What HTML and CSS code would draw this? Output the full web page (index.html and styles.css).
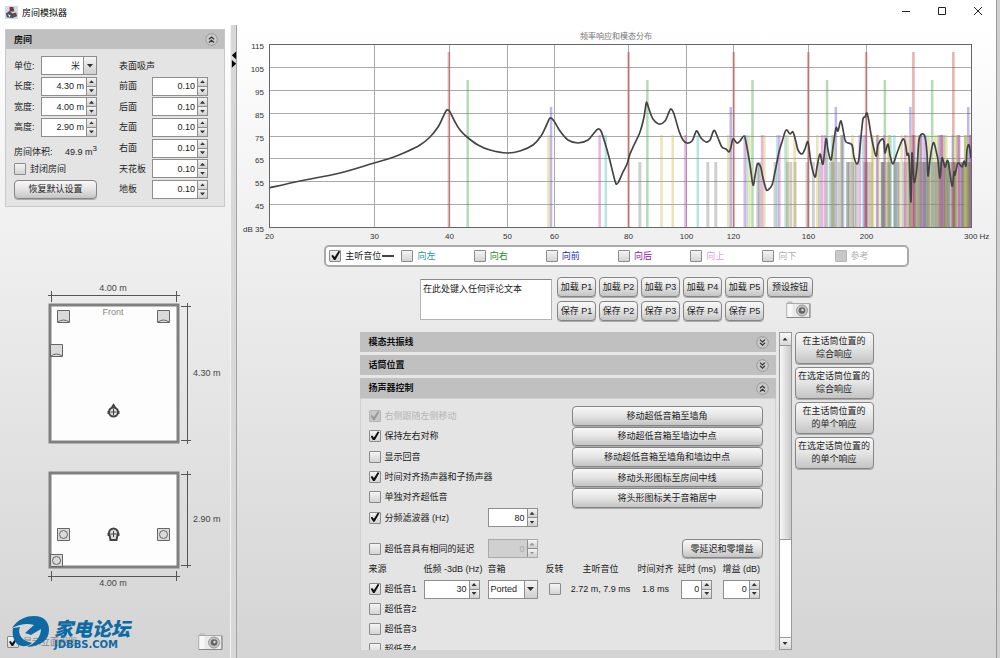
FILE: index.html
```html
<!DOCTYPE html>
<html lang="zh-cn">

<head>
  <meta charset="UTF-8">
  <meta name="viewport" content="width=device-width, initial-scale=1.0">
  <title>房间模拟器</title>
  <link rel="stylesheet" href="styles.css">
</head>

<body>
  <!-- 公用图标 -->
  <svg class="defs" width="0" height="0">
    <symbol id="up2" viewBox="0 0 13 13">
      <circle cx="6.5" cy="6.5" r="5.8" fill="#c9c9c9" stroke="#999" />
      <path d="M4 6.3 6.5 4 9 6.3M4 9.5 6.5 7.2 9 9.5" fill="none" stroke="#333" stroke-width="1.2" />
    </symbol>
    <symbol id="down2" viewBox="0 0 13 13">
      <circle cx="6.5" cy="6.5" r="5.8" fill="#c9c9c9" stroke="#999" />
      <path d="M4 3.6 6.5 5.9 9 3.6M4 6.8 6.5 9.1 9 6.8" fill="none" stroke="#333" stroke-width="1.2" />
    </symbol>
    <symbol id="camera" viewBox="0 0 25 18">
      <path d="M2 2.5V1h4v1.5" fill="#ddd" stroke="#aaa" stroke-width=".8" />
      <rect x=".8" y="2.5" width="23" height="14" fill="#e9e9e9" stroke="#aaa" />
      <rect x="1.5" y="3" width="5" height="13" fill="#f8f8f8" />
      <path d="M1 16.5h23V3" fill="none" stroke="#888" />
      <circle cx="16" cy="9.5" r="5.5" fill="#c4c4c4" stroke="#999" />
      <circle cx="16" cy="9.5" r="3.3" fill="#666" />
      <circle cx="16.5" cy="9" r="1.2" fill="#ddd" />
    </symbol>
  </svg>

  <div class="window">
    <header class="titlebar">
      <svg class="app-icon" viewBox="0 0 14 14">
        <rect width="14" height="14" fill="#d6dade" />
        <path d="M5 1h4l1 5H5z" fill="#7a3140" />
        <path d="M1 8l4-3 3 3 4-1 1 4-5 2-6-1z" fill="#46505e" />
        <path d="M3 9l3 1-1 2z" fill="#fff" />
        <path d="M9 8l3 2-3 1z" fill="#a33" />
      </svg>
      <h1>房间模拟器</h1>
      <div class="win-btns">
        <button aria-label="最小化"><svg viewBox="0 0 10 10"><path d="M1 5.5h8" /></svg></button>
        <button aria-label="最大化"><svg viewBox="0 0 10 10"><path d="M1.5 1.5h7v7h-7z" /></svg></button>
        <button aria-label="关闭"><svg viewBox="0 0 10 10"><path d="M1 1l8 8M9 1l-8 8" /></svg></button>
      </div>
    </header>

    <div class="content">
      <aside class="sidebar">
        <section class="room">
          <div class="bar">
            <h2>房间</h2>
            <button class="fold" aria-label="折叠"><svg><use href="#up2" /></svg></button>
          </div>
          <div class="room-form">
            <div class="col">
              <div class="field"><label for="unit">单位:</label>
                <span class="combo right"><select id="unit"><option>米</option><option>英尺</option></select><i></i></span>
              </div>
              <div class="field"><label for="len">长度:</label>
                <span class="spin"><input id="len" type="text" value="4.30 m"><span><button aria-label="增加"></button><button aria-label="减少"></button></span></span>
              </div>
              <div class="field"><label for="wid">宽度:</label>
                <span class="spin"><input id="wid" type="text" value="4.00 m"><span><button aria-label="增加"></button><button aria-label="减少"></button></span></span>
              </div>
              <div class="field"><label for="hei">高度:</label>
                <span class="spin"><input id="hei" type="text" value="2.90 m"><span><button aria-label="增加"></button><button aria-label="减少"></button></span></span>
              </div>
              <div class="field volume"><span>房间体积:</span><span>49.9 m<sup>3</sup></span></div>
              <label class="check"><input type="checkbox">封闭房间</label>
              <button class="btn">恢复默认设置</button>
            </div>
            <div class="col">
              <div class="field">表面吸声</div>
              <div class="field"><label for="s1">前面</label>
                <span class="spin"><input id="s1" type="text" value="0.10"><span><button aria-label="增加"></button><button aria-label="减少"></button></span></span>
              </div>
              <div class="field"><label for="s2">后面</label>
                <span class="spin"><input id="s2" type="text" value="0.10"><span><button aria-label="增加"></button><button aria-label="减少"></button></span></span>
              </div>
              <div class="field"><label for="s3">左面</label>
                <span class="spin"><input id="s3" type="text" value="0.10"><span><button aria-label="增加"></button><button aria-label="减少"></button></span></span>
              </div>
              <div class="field"><label for="s4">右面</label>
                <span class="spin"><input id="s4" type="text" value="0.10"><span><button aria-label="增加"></button><button aria-label="减少"></button></span></span>
              </div>
              <div class="field"><label for="s5">天花板</label>
                <span class="spin"><input id="s5" type="text" value="0.10"><span><button aria-label="增加"></button><button aria-label="减少"></button></span></span>
              </div>
              <div class="field"><label for="s6">地板</label>
                <span class="spin"><input id="s6" type="text" value="0.10"><span><button aria-label="增加"></button><button aria-label="减少"></button></span></span>
              </div>
            </div>
          </div>
        </section>

        <!-- 俯视图和立面图 -->
        <svg class="plans" viewBox="0 0 230 310">
          <g class="wall">
            <rect x="50" y="26" width="128" height="137" />
            <rect x="50" y="194" width="128" height="94" />
          </g>
          <g class="dim">
            <path d="M48 16.5h132M51.5 12v11M176.5 12v11" />
            <path d="M187.5 24v141M181 27.5h10M181 161.5h10" />
            <path d="M187.5 192v97M181 195.5h10M181 286.5h10" />
            <path d="M48 297.5h132M51.5 292v10M176.5 292v10" />
          </g>
          <g class="speaker">
            <path d="M57.5 31.5h12v12h-12zM58 43q5.5-4 11 0" />
            <path d="M157.5 31.5h12v12h-12zM158 43q5.5-4 11 0" />
            <path d="M50.5 65.5h12v12h-12zM51 77q5.5-4 11 0" />
            <path d="M57.5 249.5h12v12h-12zM157.5 249.5h12v12h-12zM50.5 275.5h12v12h-12z" />
            <circle cx="63.5" cy="255.5" r="4" />
            <circle cx="163.5" cy="255.5" r="4" />
            <circle cx="56.5" cy="281.5" r="4" />
          </g>
          <g class="head">
            <path d="M112 128l1.5-2 1.5 2M108.5 132v3M118.5 132v3" />
            <circle cx="113.5" cy="133" r="4.500" />
            <path d="M110.500 261l-1-5a4.500 4.500 0 1 1 8 0l-1 5zM108.500 254v3M118.500 254v3" />
            <path d="M110.5 133h6M113.5 130v6M110.5 255h6M113.5 252v6" class="cross" />
          </g>
          <text x="113" y="12" text-anchor="middle">4.00 m</text>
          <text x="113" y="36" text-anchor="middle" class="front">Front</text>
          <text x="193" y="97">4.30 m</text>
          <text x="193" y="243">2.90 m</text>
          <text x="113" y="307" text-anchor="middle">4.00 m</text>
        </svg>

        <div class="side-foot">
          <label class="check"><input type="checkbox" checked>显示立面视图</label>
          <button class="cam" aria-label="截图"><svg><use href="#camera" /></svg></button>
          <div class="logo">
            <svg viewBox="0 0 40 34">
              <path d="M0 12C6 3 14 0 22 0 32 0 37 6 37 14 37 24 29 30 15 31 24 27 29 20 29 13L19 19 13 17 22 9C16 7 8 8 0 12z" />
              <path d="M1 12 8 11C5 18 10 25 20 27 15 31 9 31 5 28 1 24 0 17 1 12z" />
            </svg>
            <div>
              <strong>家电论坛</strong>
              <span>JDBBS.COM</span>
            </div>
          </div>
        </div>
      </aside>

      <div class="splitter">
        <svg viewBox="0 0 7 20"><path d="M6 0v9L1 4.5zM1 10v9l5-4.5z" /></svg>
      </div>

      <main class="main">
        <svg class="chart" viewBox="237 25 759 216">
          <text x="616" y="39" text-anchor="middle" class="chart-title">频率响应和模态分布</text>
          <rect x="269" y="45" width="702" height="183" fill="#fff" />
          <g id="grid"></g>
          <g id="modes"></g>
          <path id="curve" />
          <rect x="269.5" y="44.5" width="702" height="183" class="frame" />
          <g id="ticks"></g>
        </svg>

        <div class="legend">
          <label class="check"><input type="checkbox" checked>主听音位<b></b></label>
          <label class="check teal"><input type="checkbox">向左</label>
          <label class="check green"><input type="checkbox">向右</label>
          <label class="check blue"><input type="checkbox">向前</label>
          <label class="check purple"><input type="checkbox">向后</label>
          <label class="check pink"><input type="checkbox">向上</label>
          <label class="check gray"><input type="checkbox">向下</label>
          <label class="check gray"><input type="checkbox" disabled>参考</label>
        </div>

        <div class="presets">
          <textarea aria-label="评论">在此处键入任何评论文本</textarea>
          <div class="preset-btns">
            <button class="btn">加载 P1</button>
            <button class="btn">加载 P2</button>
            <button class="btn">加载 P3</button>
            <button class="btn">加载 P4</button>
            <button class="btn">加载 P5</button>
            <button class="btn">预设按钮</button>
            <button class="btn">保存 P1</button>
            <button class="btn">保存 P2</button>
            <button class="btn">保存 P3</button>
            <button class="btn">保存 P4</button>
            <button class="btn">保存 P5</button>
            <button class="cam" aria-label="截图"><svg><use href="#camera" /></svg></button>
          </div>
        </div>

        <div class="lower">
          <div class="panels">
            <div class="bar">
              <h2>模态共振线</h2>
              <button class="fold" aria-label="展开"><svg><use href="#down2" /></svg></button>
            </div>
            <div class="bar">
              <h2>话筒位置</h2>
              <button class="fold" aria-label="展开"><svg><use href="#down2" /></svg></button>
            </div>
            <section class="speakers">
              <div class="bar">
                <h2>扬声器控制</h2>
                <button class="fold" aria-label="折叠"><svg><use href="#up2" /></svg></button>
              </div>
              <div class="speakers-body">
                <div class="options">
                  <div class="opts">
                    <label class="check off"><input type="checkbox" checked disabled>右侧跟随左侧移动</label>
                    <label class="check"><input type="checkbox" checked>保持左右对称</label>
                    <label class="check"><input type="checkbox">显示回音</label>
                    <label class="check"><input type="checkbox" checked>时间对齐扬声器和子扬声器</label>
                    <label class="check"><input type="checkbox">单独对齐超低音</label>
                    <div class="opt-row">
                      <label class="check"><input type="checkbox" checked>分频滤波器 (Hz)</label>
                      <span class="spin"><input type="text" value="80" aria-label="分频频率"><span><button aria-label="增加"></button><button aria-label="减少"></button></span></span>
                    </div>
                  </div>
                  <div class="moves">
                    <button class="btn">移动超低音箱至墙角</button>
                    <button class="btn">移动超低音箱至墙边中点</button>
                    <button class="btn">移动超低音箱至墙角和墙边中点</button>
                    <button class="btn">移动头形图标至房间中线</button>
                    <button class="btn">将头形图标关于音箱居中</button>
                  </div>
                </div>
                <div class="delay">
                  <div class="opt-row">
                    <label class="check"><input type="checkbox">超低音具有相同的延迟</label>
                    <span class="spin"><input type="text" value="0" disabled aria-label="延迟"><span><button disabled aria-label="增加"></button><button disabled aria-label="减少"></button></span></span>
                  </div>
                  <button class="btn">零延迟和零增益</button>
                </div>
                <table>
                  <thead>
                    <tr>
                      <th>来源</th>
                      <th>低频 -3dB (Hz)</th>
                      <th>音箱</th>
                      <th>反转</th>
                      <th>主听音位</th>
                      <th>时间对齐</th>
                      <th>延时 (ms)</th>
                      <th>增益 (dB)</th>
                    </tr>
                  </thead>
                  <tbody>
                    <tr>
                      <td><label class="check"><input type="checkbox" checked>超低音1</label></td>
                      <td><span class="spin"><input type="text" value="30" aria-label="低频"><span><button aria-label="增加"></button><button aria-label="减少"></button></span></span></td>
                      <td><span class="combo"><select aria-label="音箱"><option>Ported</option><option>Sealed</option></select><i></i></span></td>
                      <td><span class="check"><input type="checkbox" aria-label="反转"></span></td>
                      <td>2.72 m, 7.9 ms</td>
                      <td>1.8 ms</td>
                      <td><span class="spin"><input type="text" value="0" aria-label="延时"><span><button aria-label="增加"></button><button aria-label="减少"></button></span></span></td>
                      <td><span class="spin"><input type="text" value="0" aria-label="增益"><span><button aria-label="增加"></button><button aria-label="减少"></button></span></span></td>
                    </tr>
                    <tr><td colspan="8"><label class="check"><input type="checkbox">超低音2</label></td></tr>
                    <tr><td colspan="8"><label class="check"><input type="checkbox">超低音3</label></td></tr>
                    <tr><td colspan="8"><label class="check"><input type="checkbox">超低音4</label></td></tr>
                  </tbody>
                </table>
              </div>
            </section>
          </div>
          <div class="scroll">
            <button aria-label="向上滚动"></button>
            <div class="thumb"></div>
            <div class="track"></div>
            <button class="down" aria-label="向下滚动"></button>
          </div>
          <div class="responses">
            <button class="btn">在主话筒位置的<br>综合响应</button>
            <button class="btn">在选定话筒位置的<br>综合响应</button>
            <button class="btn">在主话筒位置的<br>的单个响应</button>
            <button class="btn">在选定话筒位置的<br>的单个响应</button>
          </div>
        </div>
      </main>
    </div>
  </div>
  <script src="chart.js"></script>
</body>

</html>
```
FILE: styles.css
```css
* {
  box-sizing: border-box;
  margin: 0;
  padding: 0;
}

body,
button,
input,
select,
textarea {
  font-family: "Liberation Sans", "Noto Sans CJK SC", sans-serif;
  font-size: 9px;
  line-height: 12px;
  color: #222;
}

body {
  background-color: #d0d0d0;
}

button {
  border: none;
  background: none;
}

.defs {
  position: absolute;
}

.window {
  display: flex;
  flex-direction: column;
  height: 100vh;
  margin-right: 3px;
  border-right: 1px solid #999;
  overflow: hidden;
  background: linear-gradient(#fff 4%, #f0f0f0 35%, #d4d4d4);
}

/* 标题栏 */
.titlebar {
  display: flex;
  align-items: center;
  flex: none;
  height: 25px;
  padding-left: 5px;
  background-color: #fff;
}

.app-icon {
  width: 13px;
  height: 13px;
  margin-right: 4px;
}

.titlebar h1 {
  font-size: 9px;
  font-weight: normal;
  color: #000;
}

.win-btns {
  display: flex;
  margin-left: auto;
}

.win-btns button {
  width: 36px;
  height: 24px;
}

.win-btns svg {
  width: 10px;
  height: 10px;
  fill: none;
  stroke: #222;
}

.content {
  display: flex;
  flex: 1;
  min-height: 0;
}

/* 公用控件 */
.bar {
  display: flex;
  justify-content: space-between;
  align-items: center;
  flex: none;
  height: 20px;
  padding: 0 7px 0 9px;
  background-color: #c0c0c0;
}

.bar h2 {
  font-size: 9px;
  font-weight: bold;
  color: #111;
}

.fold,
.fold svg {
  display: block;
  width: 13px;
  height: 13px;
}

.btn {
  border: 1px solid #858585;
  border-radius: 4px;
  background: linear-gradient(#f8f8f8, #e4e4e4 50%, #c4c4c4);
  box-shadow: 0 1px 0 #aaa;
  white-space: nowrap;
}

.check {
  display: flex;
  align-items: center;
  gap: 4px;
  white-space: nowrap;
}

.check input {
  appearance: none;
  position: relative;
  flex: none;
  width: 12px;
  height: 12px;
  border: 1px solid #8a8a8a;
  border-radius: 1px;
  background: linear-gradient(#f4f4f4, #d4d4d4);
}

.check input:checked::after {
  content: "";
  position: absolute;
  left: 1px;
  top: 0;
  width: 9px;
  height: 9px;
  background-color: #111;
  clip-path: polygon(0 52%, 18% 44%, 38% 66%, 80% 0, 100% 6%, 46% 100%, 30% 100%);
}

.check input:disabled {
  border-color: #b5b5b5;
  background: #c8c8c8;
}

.check input:disabled:checked::after {
  background-color: #999;
}

.off {
  color: #b4b4b4;
}

.spin,
.combo {
  display: flex;
  width: 56px;
  height: 19px;
  border: 1px solid #8e8e8e;
  background-color: #fff;
}

.spin input {
  flex: 1;
  min-width: 0;
  padding-right: 2px;
  border: none;
  background: none;
  text-align: right;
}

.spin > span {
  display: flex;
  flex-direction: column;
  flex: none;
  width: 10px;
  border-left: 1px solid #8e8e8e;
}

.spin button {
  flex: 1;
  background: linear-gradient(#f4f4f4, #cfcfcf);
}

.spin button + button {
  border-top: 1px solid #8e8e8e;
}

.spin button::before,
.scroll button::before,
.combo i::before {
  content: "";
  display: block;
  width: 5px;
  height: 3px;
  margin: auto;
  background-color: #333;
  clip-path: polygon(50% 0, 100% 100%, 0 100%);
}

.spin button + button::before,
.scroll .down::before,
.combo i::before {
  clip-path: polygon(0 0, 100% 0, 50% 100%);
}

.spin:has(:disabled) {
  border-color: #aaa;
  background-color: #d0d0d0;
}

.spin :disabled {
  color: #aaa;
}

.spin button:disabled::before {
  background-color: #999;
}

.combo select {
  appearance: none;
  flex: 1;
  min-width: 0;
  padding: 0 2px;
  border: none;
  background: none;
}

.combo.right select {
  padding-right: 3px;
  text-align-last: right;
}

.combo i {
  display: flex;
  align-items: center;
  flex: none;
  width: 13px;
  border-left: 1px solid #8e8e8e;
  background: linear-gradient(#f4f4f4, #cfcfcf);
}

.combo i::before {
  width: 7px;
  height: 4px;
}

.cam,
.cam svg {
  display: block;
  width: 25px;
  height: 18px;
}

/* 左侧栏 */
.sidebar {
  display: flex;
  flex-direction: column;
  flex: none;
  width: 230px;
}

.room {
  margin: 4px 5px 0;
  border: 1px solid #c8c8c8;
  background-color: #e4e4e4;
}

.room-form {
  display: flex;
  justify-content: space-between;
  padding: 7px 16px 7px 8px;
}

.room .bar {
  height: 19px;
  padding: 0 6px 0 8px;
}

.col {
  display: flex;
  flex-direction: column;
  justify-content: space-between;
  width: 83px;
  min-height: 143px;
}

.col + .col {
  width: 89px;
}

.field,
.col .check {
  display: flex;
  align-items: center;
  height: 19px;
}

.field {
  justify-content: space-between;
}

.field.volume {
  align-items: flex-end;
}

.field sup {
  font-size: 8px;
  line-height: 1px;
}

.col .btn {
  height: 19px;
}

.plans {
  width: 100%;
  margin-top: 72px;
}

.plans text {
  font-size: 9px;
  fill: #444;
}

.plans .front {
  fill: #888;
}

.wall rect {
  fill: #fdfdfd;
  stroke: #808080;
  stroke-width: 3;
}

.dim path {
  stroke: #555;
}

.speaker path,
.speaker circle {
  fill: #dadada;
  stroke: #666;
}

.head path,
.head circle {
  fill: #ddd;
  stroke: #444;
  stroke-width: 2;
}

.head .cross {
  stroke-width: 1;
}

.side-foot {
  display: flex;
  justify-content: space-between;
  align-items: center;
  position: relative;
  margin-top: auto;
  padding: 0 7px 7px;
}

.side-foot .check {
  color: #888;
}

/* 水印 */
.logo {
  display: flex;
  gap: 2px;
  position: absolute;
  left: 12px;
  bottom: 8px;
  color: #0d6aa5;
}

.logo svg {
  width: 40px;
  height: 34px;
  fill: #0d6aa5;
}

.logo strong,
.logo span {
  display: block;
}

.logo strong {
  font-family: "Noto Sans CJK SC", sans-serif;
  font-size: 19px;
  font-style: italic;
  font-weight: 900;
  line-height: 24px;
}

.logo span {
  font-family: "DejaVu Sans", sans-serif;
  font-size: 10px;
  font-weight: bold;
  line-height: 10px;
}

.splitter {
  flex: none;
  width: 7px;
  padding-top: 25px;
  border-left: 1px solid #f4f4f4;
  border-right: 1px solid #a4a4a4;
  background-color: #d8d8d8;
}

.splitter svg {
  display: block;
  width: 6px;
  height: 20px;
}

/* 右侧主区域 */
.main {
  display: flex;
  flex-direction: column;
  align-items: center;
  flex: 1;
  min-width: 0;
}

.chart {
  display: block;
  flex: none;
  width: 100%;
}

.chart text {
  font-size: 8px;
  fill: #333;
}

.chart .chart-title {
  fill: #777;
}

.frame {
  fill: none;
  stroke: #666;
}

#grid path {
  stroke: #aaa;
}

#curve {
  fill: none;
  stroke: #444;
  stroke-width: 1.7;
}

.legend {
  display: grid;
  grid-template-columns: repeat(8, 1fr);
  flex: none;
  width: 77%;
  height: 22px;
  margin-top: 4px;
  padding-left: 3px;
  border: 2px solid #aaa;
  border-radius: 5px;
  background-color: #fff;
}

.legend b {
  width: 12px;
  height: 2px;
  margin-left: -3px;
  background-color: #444;
}

.legend .teal {
  color: #199a9a;
}

.legend .green {
  color: #228b22;
}

.legend .blue {
  color: #2a2ac0;
}

.legend .purple {
  color: #90209c;
}

.legend .pink {
  color: #e69ae6;
}

.legend .gray {
  color: #b0b0b0;
}

.presets {
  display: flex;
  gap: 5px;
  flex: none;
  margin-top: 10px;
}

.presets textarea {
  width: 132px;
  height: 41px;
  margin-top: 2px;
  padding: 3px 2px;
  border: 1px solid #b4b4b4;
  border-top-color: #888;
  resize: none;
}

.preset-btns {
  display: grid;
  grid-template-columns: repeat(5, 39px) 46px;
  grid-auto-rows: 20px;
  gap: 4px 3px;
}

.preset-btns .cam {
  justify-self: end;
  margin-right: 2px;
}

.lower {
  display: flex;
  gap: 3px;
  flex: 1;
  width: 514px;
  min-height: 0;
  margin: 11px 0 8px;
}

.panels {
  display: flex;
  flex-direction: column;
  gap: 3px;
  flex: 1;
  min-width: 0;
}

.speakers {
  display: flex;
  flex-direction: column;
  flex: 1;
  min-height: 0;
}

.speakers-body {
  flex: 1;
  overflow: hidden;
  padding: 7px 9px 0 8px;
  border: 1px solid #d0d0d0;
  border-bottom: none;
  background-color: #e4e4e4;
}

.options {
  display: flex;
  justify-content: space-between;
}

.opts,
.moves {
  display: flex;
  flex-direction: column;
}

.opts {
  min-height: 122px;
}

.opts > * {
  flex: 1;
}

.moves {
  gap: 1px;
  width: 191px;
  height: 102px;
  margin-right: 3px;
}

.moves .btn {
  flex: 1;
}

.opt-row {
  display: flex;
  align-items: center;
}

.opt-row .check {
  width: 119px;
}

.opt-row .spin {
  width: 50px;
}

.delay {
  display: flex;
  justify-content: space-between;
  margin: 11px 3px 1px 0;
}

.delay .btn {
  width: 81px;
}

table {
  width: 395px;
  border-collapse: collapse;
  table-layout: fixed;
}

th,
td {
  height: 20px;
  font-weight: normal;
  text-align: center;
  white-space: nowrap;
}

th:nth-child(-n+3),
td:nth-child(-n+3) {
  text-align: left;
}

th:nth-child(1) {
  width: 55px;
}

th:nth-child(2) {
  width: 64px;
}

th:nth-child(3) {
  width: 57px;
}

th:nth-child(4) {
  width: 20px;
}

th:nth-child(5) {
  width: 72px;
}

th:nth-child(6) {
  width: 38px;
}

td .combo {
  width: 50px;
}

td:nth-child(4) .check {
  justify-content: center;
}

td:nth-child(7) .spin {
  width: 31px;
  margin: auto;
}

td:nth-child(8) .spin {
  width: 37px;
  margin: auto;
}

.scroll {
  display: flex;
  flex-direction: column;
  flex: none;
  width: 13px;
  border: 1px solid #999;
  background-color: #fff;
}

.scroll button {
  height: 12px;
  background: linear-gradient(#f8f8f8, #d8d8d8);
}

.thumb {
  flex: 2;
  border-top: 1px solid #999;
  border-bottom: 1px solid #999;
  background: linear-gradient(90deg, #f8f8f8, #c8c8c8);
}

.track {
  flex: 1;
}

.scroll .down {
  border-top: 1px solid #999;
}

.responses {
  display: flex;
  flex-direction: column;
  gap: 3px;
  width: 79px;
}

.responses .btn {
  height: 32px;
  line-height: 13px;
}
```
FILE: chart.js
```javascript
var NS = 'http://www.w3.org/2000/svg';
var left = 269, right = 971, top0 = 45, bottom = 228;

// 房间尺寸 长 宽 高
var size = [4.3, 4, 2.9];
var c = 344;

var colors = {
  '100': '#c03030',
  '010': '#40a040',
  '001': '#5548c8',
  '110': '#c8b840',
  '101': '#c040c0',
  '011': '#40c0c0',
  '111': '#808080'
};
// 轴向长 轴向宽 轴向高 切向 斜向
var tops = { '100': 52, '010': 80, '001': 107, '110': 135, '101': 135, '011': 135, '111': 162 };

var points = [
  [269, 188], [300, 181], [340, 173], [374, 163], [391, 158], [406, 152], [420, 145], [430, 137], [438, 127],
  [443, 117], [446, 111], [448, 110], [450, 112], [455, 122], [460, 130], [467, 137], [478, 145], [490, 150],
  [507, 153], [520, 151], [533, 145], [541, 136], [547, 124], [550, 118], [554, 121], [560, 131], [568, 140],
  [578, 143], [588, 140], [594, 133], [598, 129], [601, 131], [605, 143], [609, 157], [615, 181], [617, 184],
  [619, 181], [623, 172], [627, 164], [630, 154], [634, 145], [640, 132], [644, 117], [646, 104], [647, 103],
  [650, 112], [653, 119], [659, 124], [665, 121], [669, 112], [671, 109], [674, 114], [679, 131], [683, 140],
  [687, 143], [692, 141], [695, 134], [697, 131], [701, 138], [706, 142], [710, 140], [713, 132], [715, 131],
  [718, 138], [722, 147], [726, 149], [729, 152], [731, 147], [733, 139], [737, 143], [740, 141], [744, 136],
  [746, 142], [750, 165], [753, 185], [755, 176], [757, 165], [759, 164], [761, 168], [763, 178], [766, 189],
  [768, 190], [772, 185], [775, 172], [779, 152], [782, 142], [785, 132], [787, 130], [790, 134], [793, 132],
  [796, 142], [798, 150], [802, 154], [805, 149], [808, 142], [811, 163], [815, 177], [817, 167], [820, 154],
  [823, 164], [826, 139], [828, 150], [831, 160], [833, 147], [836, 128], [838, 131], [841, 121], [844, 135],
  [846, 142], [852, 145], [854, 157], [857, 164], [859, 158], [861, 137], [863, 119], [865, 117], [867, 113],
  [869, 122], [872, 140], [876, 156], [878, 145], [882, 139], [884, 142], [885, 153], [888, 144], [890, 155],
  [893, 164], [897, 153], [903, 139], [906, 147], [907, 155], [909, 157], [911, 202], [912, 153], [914, 182],
  [917, 167], [919, 140], [922, 134], [925, 137], [927, 153], [928, 176], [930, 160], [932, 147], [934, 143],
  [937, 155], [938, 160], [940, 178], [942, 158], [945, 167], [948, 161], [952, 186], [954, 172], [955, 175],
  [958, 163], [962, 167], [964, 161], [966, 166], [967, 150], [969, 145], [971, 158]
];

drawGrid();
drawModes();
drawCurve();

function getX(hz) {
  return left + (right - left) * Math.log(hz / 20) / Math.log(15);
}

function add(parent, name, attrs, text) {
  var ele = document.createElementNS(NS, name);
  for (var key in attrs) {
    ele.setAttribute(key, attrs[key]);
  }
  if (text) {
    ele.textContent = text;
  }
  document.querySelector(parent).appendChild(ele);
}

function drawGrid() {
  for (var i = 0; i <= 8; i++) {
    var y = top0 + (bottom - top0) * i / 8;
    add('#grid', 'path', { d: `M${left} ${Math.round(y) - 0.5}H${right}` });
    add('#ticks', 'text', { x: 264, y: y + 4, 'text-anchor': 'end' }, (i === 8 ? 'dB ' : '') + (115 - i * 10));
  }
  [20, 30, 40, 50, 60, 80, 100, 120, 160, 200].forEach(function (hz) {
    var x = Math.round(getX(hz)) + 0.5;
    add('#grid', 'path', { d: `M${x} ${top0}V${bottom}` });
    add('#ticks', 'text', { x: x, y: 239, 'text-anchor': 'middle' }, hz);
  });
  add('#ticks', 'text', { x: 964, y: 239 }, '300 Hz');
}

// f = c / 2 * sqrt((l/L)^2 + (w/W)^2 + (h/H)^2)
function drawModes() {
  for (var l = 0; l < 8; l++) {
    for (var w = 0; w < 7; w++) {
      for (var h = 0; h < 6; h++) {
        var hz = c / 2 * Math.hypot(l / size[0], w / size[1], h / size[2]);
        if (hz === 0 || hz > 300) {
          continue;
        }
        var type = '' + (l && 1) + (w && 1) + (h && 1);
        var x = getX(hz) - 1;
        add('#modes', 'rect', {
          x: x,
          y: tops[type],
          width: Math.min(type === '111' ? 3 : 2.5, right - x),
          height: bottom - tops[type],
          fill: colors[type],
          'fill-opacity': 0.38
        });
      }
    }
  }
}

// 平滑曲线
function drawCurve() {
  var d = 'M' + points[0];
  for (var i = 0; i < points.length - 1; i++) {
    var p0 = points[i - 1] || points[i];
    var p1 = points[i];
    var p2 = points[i + 1];
    var p3 = points[i + 2] || p2;
    d += `C${p1[0] + (p2[0] - p0[0]) / 6} ${p1[1] + (p2[1] - p0[1]) / 6}`;
    d += ` ${p2[0] - (p3[0] - p1[0]) / 6} ${p2[1] - (p3[1] - p1[1]) / 6} ${p2}`;
  }
  document.querySelector('#curve').setAttribute('d', d);
}
```
